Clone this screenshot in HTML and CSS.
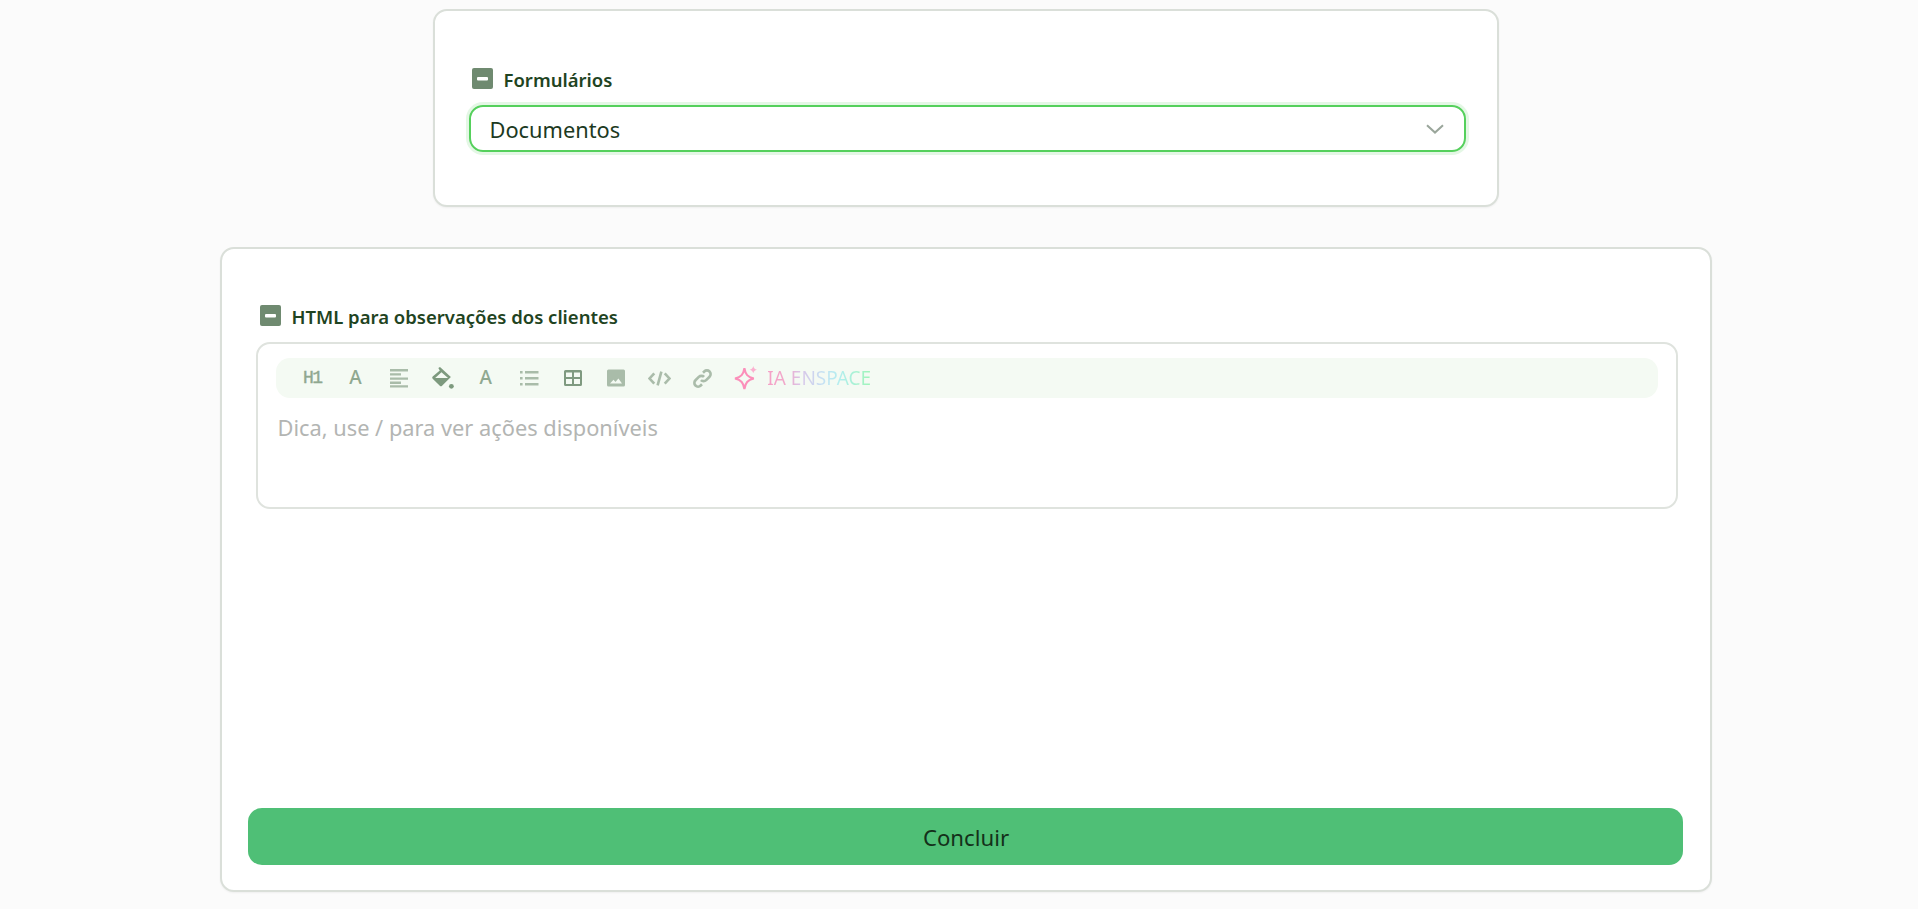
FILE: index.html
```html
<!DOCTYPE html>
<html lang="pt-BR">
<head>
<meta charset="utf-8">
<title>Formulários</title>
<link rel="stylesheet" href="styles.css">
</head>
<body>
<main class="page">
  <section class="card card-small">
    <div class="field-label">
      <svg class="minus-box" viewBox="0 0 21 21"><rect width="21" height="21" rx="2"/><rect class="minus" x="5" y="9" width="11" height="3.4" rx="1"/></svg>
      <span>Formulários</span>
    </div>
    <div class="select">
      <span class="select-value">Documentos</span>
      <svg class="chevron" viewBox="0 0 18 10"><path d="M1 1.2 9 8.6 17 1.2"/></svg>
    </div>
  </section>

  <section class="card card-large">
    <div class="field-label label-html">
      <svg class="minus-box" viewBox="0 0 21 21"><rect width="21" height="21" rx="2"/><rect class="minus" x="5" y="9" width="11" height="3.4" rx="1"/></svg>
      <span>HTML para observações dos clientes</span>
    </div>
    <div class="editor">
      <div class="toolbar">
        <span class="tool tool-h1">H1</span>
        <span class="tool tool-a">A</span>
        <span class="tool"><svg viewBox="0 0 20 20"><path d="M1 1h18v2.400H1zM1 5.200h11v2.400H1zM1 9.400h18v2.400H1zM1 13.600h11V16H1zM1 17.200h18v2.400H1z"/></svg></span>
        <span class="tool"><svg class="bucket" viewBox="0 0 22 22"><path d="M7 1 8.600 0 19 9.600 10.600 18a1.600 1.600 0 0 1-2.200 0L1.600 11.200a1.600 1.600 0 0 1 0-2.200L8.400 3.400zM10 5 4 10.500h12.300z" fill-rule="evenodd"/><circle cx="19.500" cy="18.500" r="2.300"/></svg></span>
        <span class="tool tool-a">A</span>
        <span class="tool"><svg viewBox="0 0 20 20"><path d="M1 3h2.600v2.400H1zM6 3h13.500v2.400H6zM1 9h2.600v2.400H1zM6 9h13.500v2.400H6zM1 15h2.600v2.400H1zM6 15h13.500v2.400H6z"/></svg></span>
        <span class="tool"><svg class="dark" viewBox="0 0 20 20"><path fill-rule="evenodd" d="M2.500 2h15A1.500 1.500 0 0 1 19 3.500v13a1.500 1.500 0 0 1-1.500 1.500h-15A1.500 1.500 0 0 1 1 16.500v-13A1.500 1.500 0 0 1 2.500 2zM3 4.500V9h6V4.500zM11 4.500V9h6V4.500zM3 11v5h6v-5zM11 11v5h6v-5z"/></svg></span>
        <span class="tool"><svg viewBox="0 0 20 20"><path fill-rule="evenodd" d="M2.500 1.500h15a1.500 1.500 0 0 1 1.500 1.500v14a1.500 1.500 0 0 1-1.500 1.500h-15A1.500 1.500 0 0 1 1 17V3a1.500 1.500 0 0 1 1.500-1.500zM4 15.500h12l-3.600-5-2.900 3.600-2-2.400z"/></svg></span>
        <span class="tool"><svg class="line" viewBox="0 0 22 20"><path d="M6 5 1.500 10 6 15M16 5l4.500 5L16 15M12.800 3.500 9.200 16.500"/></svg></span>
        <span class="tool"><svg class="line" viewBox="0 0 20 20"><path d="M8.500 11.500a3.500 3.500 0 0 0 5 0l3.200-3.200a3.500 3.500 0 0 0-5-5L10.500 4.500M11.500 8.500a3.500 3.500 0 0 0-5 0l-3.200 3.200a3.500 3.500 0 0 0 5 5l1.200-1.200"/></svg></span>
        <span class="tool"><svg class="sparkle" viewBox="0 0 24 24"><path d="M10 3c1 6 3 8.500 9 10-6 1.500-8 4-9 10-1-6-3-8.500-9-10 6-1.500 8-4 9-10z"/><path class="spark-small" d="M18.500 1c.5 2.100 1.400 3 3.500 3.500-2.100.5-3 1.400-3.500 3.500-.5-2.100-1.400-3-3.500-3.500 2.100-.5 3-1.400 3.500-3.500z"/></svg></span>
        <span class="ai-label">IA ENSPACE</span>
      </div>
      <p class="placeholder">Dica, use / para ver ações disponíveis</p>
    </div>
    <button class="submit" type="button">Concluir</button>
  </section>
</main>
</body>
</html>
```
FILE: styles.css
```css
* { box-sizing: border-box; }
html, body { margin: 0; height: 100%; overflow: hidden; }
body {
  background: #fbfbfb;
  color: #1d3a1f;
  font-family: "Noto Sans", "Open Sans", sans-serif;
}
.page {
  display: flex;
  flex-direction: column;
  align-items: center;
  gap: 40px;
  padding: 9px 0 0 13px;
}
.card {
  display: flex;
  flex-direction: column;
  background: #fff;
  border: 2px solid #dadfd9;
  border-radius: 14px;
  box-shadow: 0 1px 2px rgba(0, 0, 0, .05);
}
.card-small {
  width: 1066px;
  height: 198px;
  padding: 58px 31px 0 34px;
}
.card-large {
  width: 1492px;
  height: 645px;
  padding: 57px 26px 0 26px;
}
.field-label {
  display: flex;
  align-items: center;
  gap: 11px;
  height: 21px;
  margin-left: 3px;
  font-size: 18.500px;
  font-weight: 600;
  color: #1f4422;
}
.label-html { margin-left: 12px; }
.minus-box { width: 21px; height: 21px; flex: none; margin-top: -2px; fill: #6f8a70; }
.minus-box .minus { fill: #fff; }
.select {
  display: flex;
  align-items: center;
  justify-content: space-between;
  height: 47px;
  margin-top: 15px;
  padding: 0 20px 0 19px;
  border: 2px solid #55d05c;
  border-radius: 14px;
  box-shadow: 0 0 0 3px rgba(85, 208, 92, .16);
  font-size: 21.800px;
  color: #1d3a1f;
}
.select-value { padding-top: 2px; }
.chevron { width: 18px; height: 10px; fill: none; stroke: #9aa69b; stroke-width: 2; }
.editor {
  height: 167px;
  margin: 15px 6px 0 8px;
  padding: 14px 18px 0;
  border: 2px solid #dfe3de;
  border-radius: 14px;
}
.toolbar {
  display: flex;
  align-items: center;
  height: 40px;
  padding-left: 15px;
  background: #f4faf3;
  border-radius: 14px;
}
.tool {
  display: flex;
  align-items: center;
  justify-content: center;
  flex: none;
  width: 43.400px;
  height: 40px;
  color: #8fa890;
}
.tool svg { width: 20px; height: 20px; fill: #a9bca9; }
.tool svg.dark { fill: #7f9a80; }
.tool svg.bucket { width: 23px; height: 23px; fill: #7d9a7e; }
.tool svg.line { width: 23px; height: 21px; fill: none; stroke: #aabcaa; stroke-width: 2.500; }
.tool svg.sparkle { width: 25px; height: 25px; margin-bottom: 2px; fill: none; stroke: #fb8fba; stroke-width: 2; }
.tool svg .spark-small { fill: #fbb0cf; stroke: none; }
.tool-h1 {
  font-family: "Liberation Mono", monospace;
  font-size: 18px;
  font-weight: 400;
  -webkit-text-stroke: .4px #8fa890;
  letter-spacing: -1.500px;
}
.tool-a { font-size: 19px; font-weight: 500; padding-bottom: 3px; }
.ai-label {
  margin-left: -.500px;
  font-size: 19px;
  background: linear-gradient(90deg, #f6a0c6 0%, #f0aacb 20%, #d9c4e8 32%, #c4e2f3 55%, #b2eeee 70%, #9ff5b8 100%);
  -webkit-background-clip: text;
  background-clip: text;
  color: transparent;
}
.placeholder {
  margin: 15px 0 0 2px;
  font-size: 21.800px;
  color: #b3b5b3;
}
.submit {
  width: 1435px;
  height: 57px;
  margin: auto 0 25px 0;
  padding: 2px 0 0 2px;
  background: #4fbf76;
  border: 0;
  border-radius: 14px;
  color: #14301a;
  font: 400 22.200px "Noto Sans", "Open Sans", sans-serif;
}
```
